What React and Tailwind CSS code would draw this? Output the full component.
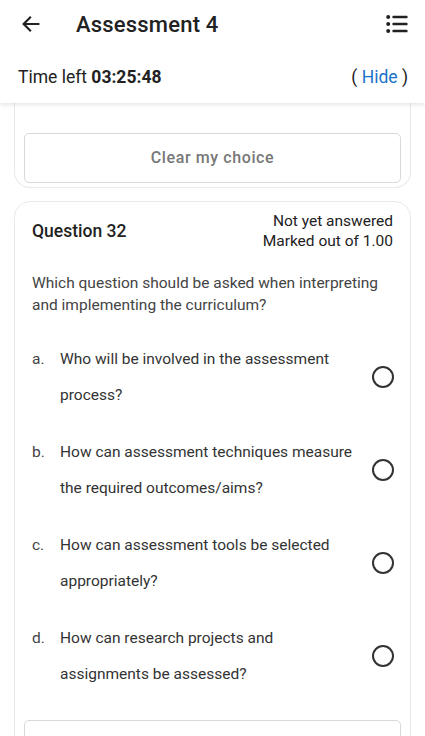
import React from "react";

const options = [
  { letter: "a.", text: "Who will be involved in the assessment process?" },
  { letter: "b.", text: "How can assessment techniques measure the required outcomes/aims?" },
  { letter: "c.", text: "How can assessment tools be selected appropriately?" },
  { letter: "d.", text: "How can research projects and assignments be assessed?" },
];

function ClearButton() {
  return (
    <button className="w-full h-[50px] border border-[#d9d9d9] rounded-[5px] bg-white text-[16px] font-medium tracking-[0.6px] text-[#777777]">
      Clear my choice
    </button>
  );
}

export default function App() {
  return (
    <div className="w-[425px] h-[736px] overflow-hidden bg-white font-['Roboto',sans-serif] text-[#222]">
      <div className="relative z-10 bg-white shadow-[0_2px_4px_rgba(0,0,0,0.1)]">
        <div className="h-[48px] flex items-center pl-[20px] pr-[17px]">
          <svg width="22" height="22" viewBox="0 0 24 24" fill="none" stroke="#222" strokeWidth="2.4" strokeLinecap="square">
            <path d="M20 12H5M11 5l-7 7 7 7" />
          </svg>
          <h1 className="ml-[34px] mt-[1px] text-[22px] font-medium tracking-[0.2px] text-[#222]">Assessment 4</h1>
          <svg className="ml-auto" width="22" height="20" viewBox="0 0 22 20" fill="#222">
            <circle cx="2.2" cy="3" r="2" />
            <circle cx="2.2" cy="10" r="2" />
            <circle cx="2.2" cy="17" r="2" />
            <rect x="6.5" y="1.8" width="15" height="2.5" rx="0.6" />
            <rect x="6.5" y="8.8" width="15" height="2.5" rx="0.6" />
            <rect x="6.5" y="15.8" width="15" height="2.5" rx="0.6" />
          </svg>
        </div>
        <div className="h-[55px] flex items-center justify-between pl-[18px] pr-[17px] pt-[3px] text-[17.5px]">
          <div>
            Time left <span className="font-bold">03:25:48</span>
          </div>
          <div className="text-[#222]">
            ( <span className="text-[#1a73c8]">Hide</span> )
          </div>
        </div>
      </div>

      <div className="px-[14px]">
        <div className="border border-t-0 border-[#e9e9e9] rounded-b-[16px] px-[9px] pt-[30px] pb-[4px]">
          <ClearButton />
        </div>

        <div className="mt-[13px] border border-[#e9e9e9] rounded-[16px]">
          <div className="px-[17px] pt-[9px] flex justify-between items-center">
            <div className="text-[17.5px] font-medium text-[#222]">Question 32</div>
            <div className="text-right text-[15.5px] leading-[20px] text-[#222]">
              <div>Not yet answered</div>
              <div>Marked out of 1.00</div>
            </div>
          </div>
          <p className="px-[17px] mt-[21px] text-[15.5px] leading-[22px] text-[#444]">
            Which question should be asked when interpreting and implementing the curriculum?
          </p>
          <div className="mt-[25px] px-[17px]">
            {options.map((o) => (
              <div key={o.letter} className="flex items-center h-[93px] pb-[22px]">
                <div className="w-[28px] self-start text-[15.5px] leading-[36px] text-[#444]">{o.letter}</div>
                <div className="w-[295px] self-start text-[15.5px] leading-[36px] text-[#333]">{o.text}</div>
                <div className="ml-auto -mr-[1px] w-[22px] h-[22px] rounded-full border-[2px] border-[#333]" />
              </div>
            ))}
          </div>
          <div className="px-[9px] pt-[7px]">
            <ClearButton />
          </div>
        </div>
      </div>
    </div>
  );
}
